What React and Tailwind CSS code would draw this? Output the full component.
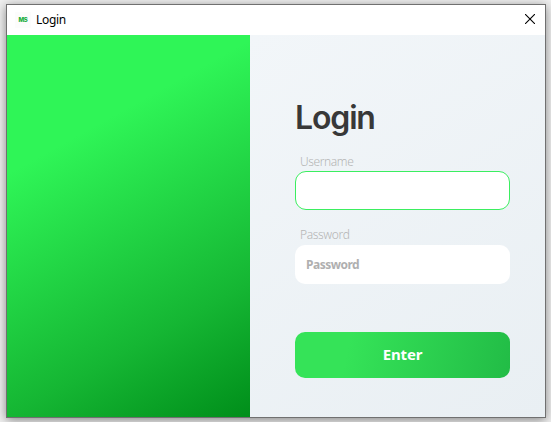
import React from 'react';

function TitleBar() {
  return (
    <header className="flex h-[30px] items-center bg-white pl-2">
      <div className="flex h-4 w-4 items-center justify-center bg-[#fcfcfc] font-['Inter',sans-serif] text-[6px] leading-none font-extrabold tracking-[-0.2px] text-[#18ad3c]">
        MS
      </div>
      <span className="ml-[5px] text-[12px] leading-4 tracking-[-0.3px] text-black">Login</span>
      <button aria-label="Close" className="mr-[10px] ml-auto">
        <svg width="10" height="10" viewBox="0 0 10 10" className="mt-[-2px] block" stroke="#000" strokeWidth="1.1">
          <path d="M0 0 10 10M10 0 0 10" />
        </svg>
      </button>
    </header>
  );
}

export default function App() {
  return (
    <div className="h-[422px] w-[551px] overflow-hidden bg-[#f0f0f0] pt-1 pl-1.5 font-['Noto_Sans','Segoe_UI',sans-serif]">
      <div className="h-[414px] w-[540px] border border-[#707070] shadow-[0_2px_10px_rgba(0,0,0,0.45)]">
        <TitleBar />
        <div className="flex h-[382px]">
          <aside className="w-[243px] bg-[linear-gradient(151deg,#2ff557_27%,#15b633_74%,#008e1a_100%)]" />
          <main className="flex-1 bg-[linear-gradient(148deg,#f2f6f9,#e9eff3)] pt-[63px] pl-[45px]">
            <h1 className="h-[54px] font-['Inter',sans-serif] text-[32px] leading-[40px] font-semibold tracking-[-1.15px] text-[#383838]">Login</h1>
            <label className="block h-[19px] pl-[5px] text-[12px] leading-[19px] font-light tracking-[-0.4px] text-[#b4b4b4]">Username</label>
            <div className="h-[39px] w-[215px] rounded-[11px] border border-[#3bee60] bg-white" />
            <label className="mt-[15px] block h-5 pl-[5px] text-[12px] leading-[19px] font-light tracking-[-0.35px] text-[#b4b4b4]">Password</label>
            <div className="flex h-[39px] w-[215px] items-center rounded-[10px] bg-white pl-[11px] text-[12px] font-bold tracking-[-0.5px] text-[#afafaf]">
              Password
            </div>
            <button className="mt-12 flex h-[46px] w-[215px] items-center justify-center rounded-[10px] bg-[linear-gradient(102deg,#35e358_25%,#22bc46_100%)] pb-0.5 text-[15px] font-bold tracking-[-0.2px] text-white">
              Enter
            </button>
          </main>
        </div>
      </div>
    </div>
  );
}
